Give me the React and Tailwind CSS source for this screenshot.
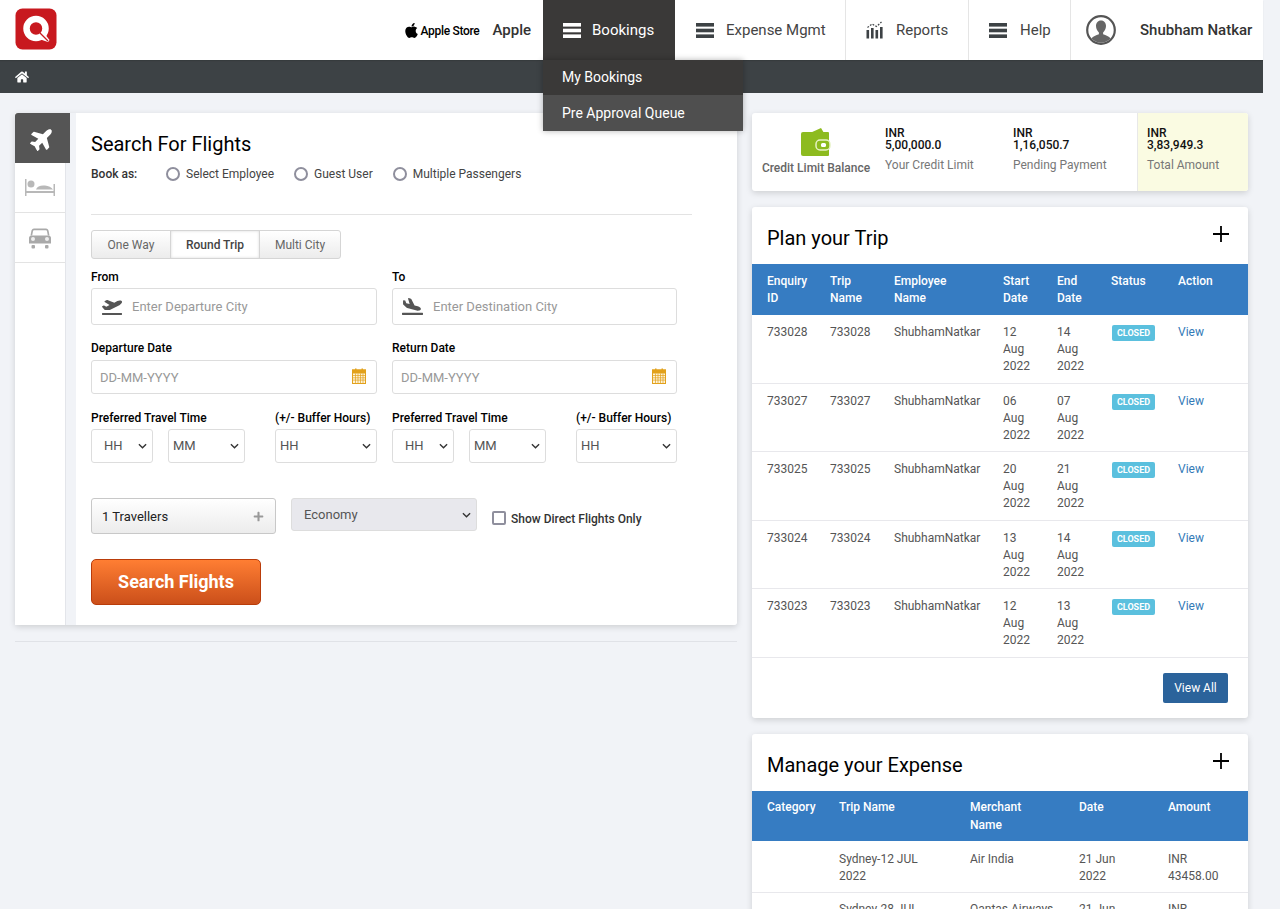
import { FaApple, FaHome, FaPlane, FaPlaneDeparture, FaPlaneArrival, FaPlus } from 'react-icons/fa'

const trips = [
  ['733028', '12', '14'],
  ['733027', '06', '07'],
  ['733025', '20', '21'],
  ['733024', '13', '14'],
  ['733023', '12', '13'],
]

function Bars({ className }) {
  return (
    <svg viewBox="0 0 18 15" className={className} fill="currentColor">
      <rect x="0" y="0" width="18" height="3.6" />
      <rect x="0" y="5.7" width="18" height="3.6" />
      <rect x="0" y="11.4" width="18" height="3.6" />
    </svg>
  )
}

function ReportsIcon() {
  return (
    <svg viewBox="0 0 18 18" className="w-[18px] h-[18px] text-[#3d4245]" fill="currentColor">
      <rect x="0.5" y="9" width="2.6" height="8.5" />
      <rect x="5" y="7" width="2.6" height="10.5" />
      <rect x="9.5" y="9" width="2.6" height="8.5" />
      <rect x="14" y="6" width="2.6" height="11.5" />
      <path d="M1.5 6.5 L6 3 L10.5 5.5 L15.5 1" fill="none" stroke="currentColor" strokeWidth="1.2" strokeDasharray="1.8 1.4" />
    </svg>
  )
}

function UserIcon() {
  return (
    <svg viewBox="0 0 30 30" className="w-[30px] h-[30px]">
      <rect x="1.2" y="1.2" width="27.6" height="27.6" rx="13.8" fill="#fff" stroke="#555" strokeWidth="2.2" />
      <path d="M15 5.5c3.3 0 5 2.500 5 5.600 0 2.800-1.500 5.400-2.900 6.300v1.900c2.800 1 6 2 7.400 4.200-2.300 2.600-5.700 4.200-9.500 4.200s-7.200-1.600-9.500-4.200c1.400-2.200 4.600-3.200 7.400-4.200v-1.900C11.500 16.500 10 13.900 10 11.100c0-3.100 1.700-5.600 5-5.600z" fill="#666" />
    </svg>
  )
}

function Logo() {
  return (
    <svg viewBox="0 0 42 42" className="w-[42px] h-[42px]">
      <rect x="0.500" y="0.500" width="41" height="41" rx="7" fill="#c8191f" />
      <circle cx="21" cy="20.500" r="9.500" fill="none" stroke="#fff" strokeWidth="6.500" />
      <path d="M21 30 L33 34 L34.500 32 L29 25z" fill="#fff" />
      <path d="M25 25 L33 33" stroke="#c8191f" strokeWidth="1.300" />
    </svg>
  )
}

function WalletIcon() {
  return (
    <svg viewBox="0 0 30 28" className="w-[30px] h-[28px]">
      <path d="M9 5 L20 0 L23 5z" fill="#8dbb1f" />
      <path d="M2 4 H27 a1 1 0 0 1 1 1 V27 a1 1 0 0 1-1 1 H2 a2 2 0 0 1-2-2 V6 a2 2 0 0 1 2-2z" fill="#8dbb1f" />
      <rect x="15" y="12" width="14" height="10" rx="4" fill="#8dbb1f" stroke="#e6f2c4" strokeWidth="1.500" />
      <rect x="20" y="15" width="5" height="4" rx="1.500" fill="#fff" />
    </svg>
  )
}

function BedIcon() {
  return (
    <svg viewBox="0 0 30 17" className="w-[30px] h-[17px]" fill="#b8b8b8">
      <rect x="0" y="0" width="1.500" height="17" />
      <rect x="28.500" y="5" width="1.500" height="12" />
      <rect x="0" y="12" width="30" height="2" />
      <circle cx="6" cy="5" r="3.500" />
      <path d="M11 10.500c1-3.500 5-4.500 9-4 3.500.4 6.500 1.800 8 4z" />
    </svg>
  )
}

function CarIcon() {
  return (
    <svg viewBox="0 0 22 22" className="w-[22px] h-[22px]" fill="#a9a9a9">
      <path d="M5 1.500h12c1.500 0 2.300 1 2.600 2.300l.9 4.700H18.800l-.8-4.300c-.1-.6-.5-1-1-1H5c-.5 0-.9.400-1 1l-.8 4.300H1.500l.9-4.700C2.700 2.500 3.500 1.500 5 1.500z" />
      <path d="M2.500 8.500h17c1.400 0 2.500 1.100 2.500 2.500v5.500H0V11c0-1.400 1.100-2.500 2.500-2.500z" />
      <circle cx="4" cy="12" r="2" fill="#eee" />
      <circle cx="18" cy="12" r="2" fill="#eee" />
      <rect x="2.500" y="18" width="3.500" height="3.500" rx="1" />
      <rect x="16" y="18" width="3.500" height="3.500" rx="1" />
    </svg>
  )
}

function CalendarIcon() {
  return (
    <svg viewBox="0 0 14 16" className="w-[14px] h-[16px]">
      <rect x="0.500" y="2" width="13" height="13.500" fill="#fdf3d8" stroke="#e2a11c" />
      <rect x="0.500" y="2" width="13" height="3" fill="#e2a11c" stroke="#e2a11c" />
      <rect x="3" y="0.500" width="1.500" height="3" fill="#e2a11c" />
      <rect x="9.500" y="0.500" width="1.500" height="3" fill="#e2a11c" />
      <path d="M1 7.500H13M1 9.800H13M1 12.100H13M3.500 5.500V15M6 5.500V15M8.500 5.500V15M11 5.500V15" stroke="#e2a11c" strokeWidth="0.700" />
    </svg>
  )
}

function Chevron() {
  return (
    <svg viewBox="0 0 10 6" className="w-[9px] h-[6px] absolute right-[6px] top-1/2 -translate-y-1/2 pointer-events-none text-[#333]" fill="none" stroke="currentColor" strokeWidth="1.500">
      <path d="M1 1l4 4 4-4" />
    </svg>
  )
}

function Select({ value, className, pad = 'pl-[5px]' }) {
  return (
    <div className={`relative ${className}`}>
      <select defaultValue={value} className={`appearance-none w-full h-[34px] bg-white border border-[#ddd] rounded-[3px] text-[13px] text-[#555] ${pad}`}>
        <option>{value}</option>
      </select>
      <Chevron />
    </div>
  )
}

function Radio({ label }) {
  return (
    <span className="flex items-center gap-[6px] text-[12px] text-[#444]">
      <span className="w-[14px] h-[14px] rounded-full border-2 border-[#8f8f9d] bg-white" />
      {label}
    </span>
  )
}

function NavItem({ icon, label, className }) {
  return (
    <div className={`flex items-center h-[60px] border-l border-[#e5e5e5] text-[15px] text-[#444] ${className}`}>
      {icon}
      {label}
    </div>
  )
}

function TimeRow({ lastWidth }) {
  return (
    <div className="flex w-[286px]">
      <Select value="HH" className="w-[62px]" pad="pl-[12px]" />
      <Select value="MM" className="w-[77px] ml-[15px]" pad="pl-[4px]" />
      <Select value="HH" className={`ml-[30px] ${lastWidth}`} pad="pl-[4px]" />
    </div>
  )
}

function Field({ label, icon, placeholder, right, className, h = 'h-[37px]', pad = 'pl-[40px]', gap = 'mt-[2px]' }) {
  return (
    <div className={className}>
      <label className="block text-[12px] font-medium text-black leading-[17px]">{label}</label>
      <div className={`relative ${gap} ${h}`}>
        {icon}
        <input placeholder={placeholder} className={`w-full h-full border border-[#ddd] rounded-[3px] bg-white text-[13px] placeholder:text-[#999] ${pad}`} />
        {right}
      </div>
    </div>
  )
}

function CardTitle({ title }) {
  return (
    <div className="flex justify-between h-[57px] px-[15px] pt-[16px]">
      <h2 className="text-[20px] leading-[30px] text-black">{title}</h2>
      <svg viewBox="0 0 16 16" className="w-[16px] h-[16px] mt-[3px] mr-[4px]" stroke="#000" strokeWidth="1.800">
        <path d="M8 0V16M0 8H16" />
      </svg>
    </div>
  )
}

function Amount({ value, label }) {
  return (
    <div>
      <div className="text-[12px] font-medium text-[#111] leading-[12px]">INR<br />{value}</div>
      <div className="text-[12px] text-[#777] mt-[6px] leading-[17px]">{label}</div>
    </div>
  )
}

export default function App() {
  return (
    <div className="w-full h-[909px] overflow-hidden bg-[#f1f3f7] font-['Roboto',sans-serif]">
      <div className="w-[1263px] relative">
        {/* header */}
        <header className="h-[60px] bg-white flex items-center shadow-[0_1px_1px_rgba(0,0,0,0.1)] relative">
          <div className="ml-[15px] -mt-[3px] flex"><Logo /></div>
          <div className="ml-auto flex items-center h-[60px]">
            <div className="flex items-center text-black font-medium text-[12px] tracking-[-0.3px] mr-[13px]">
              <FaApple className="text-[17px]" />
              <span className="mt-[2px]">Apple Store</span>
            </div>
            <div className="text-[15px] font-medium text-[#333] mr-[12px]">Apple</div>
            <div className="w-[132px] h-[60px] bg-[#3a3938] text-white flex items-center gap-[11px] pl-[20px] text-[15px]">
              <Bars className="w-[18px] h-[15px]" />
              Bookings
            </div>
            <NavItem className="w-[170px] border-l-0 pl-[21px] gap-[12px]" icon={<Bars className="w-[18px] h-[15px] text-[#3d4245]" />} label="Expense Mgmt" />
            <NavItem className="w-[123px] pl-[20px] gap-[12px]" icon={<ReportsIcon />} label="Reports" />
            <NavItem className="w-[102px] pl-[20px] gap-[13px]" icon={<Bars className="w-[18px] h-[15px] text-[#3d4245]" />} label="Help" />
            <div className="w-[193px] h-[60px] border-l border-[#e5e5e5] flex items-center pl-[15px]">
              <UserIcon />
              <span className="ml-[24px] text-[15px] font-medium text-[#333]">Shubham Natkar</span>
            </div>
          </div>
        </header>

        {/* breadcrumb */}
        <div className="h-[33px] bg-[#3d4245] flex items-center pl-[15px]">
          <FaHome className="text-white text-[14px]" />
        </div>

        {/* bookings dropdown */}
        <div className="absolute left-[543px] top-[60px] w-[200px] z-10 text-[14px] text-white shadow-[0_0_6px_rgba(0,0,0,0.3)]">
          <div className="h-[35px] bg-[#3a3938] pl-[19px] flex items-center">My Bookings</div>
          <div className="h-[36px] bg-[#4f4f4f] pl-[19px] flex items-center">Pre Approval Queue</div>
        </div>

        <div className="flex pt-[20px] pl-[15px]">
          {/* left column */}
          <div className="w-[722px]">
            <div className="flex h-[512px] rounded-[3px] shadow-[0_2px_6px_rgba(0,0,0,0.15)] relative">
              <div className="w-[51px] bg-white border-r border-[#e3e5ea]">
                <div className="w-[55px] h-[50px] bg-[#555] flex items-center justify-center rounded-tl-[3px] relative">
                  <FaPlane className="text-white text-[25px] -rotate-45" />
                </div>
                <div className="h-[50px] border-b border-[#e3e3e3] flex items-center justify-center">
                  <BedIcon />
                </div>
                <div className="h-[50px] border-b border-[#e3e3e3] flex items-center justify-center">
                  <CarIcon />
                </div>
              </div>
              <div className="w-[10px] bg-[#f1f3f7]" />
              <div className="flex-1 bg-white pl-[15px] rounded-r-[3px]">
                <h1 className="text-[20px] leading-[30px] text-black mt-[16px]">Search For Flights</h1>
                <div className="flex items-center h-[20px] mt-[5px] text-[12px]">
                  <span className="font-medium text-[#333] w-[75px]">Book as:</span>
                  <Radio label="Select Employee" />
                  <div className="w-[20px]" />
                  <Radio label="Guest User" />
                  <div className="w-[20px]" />
                  <Radio label="Multiple Passengers" />
                </div>
                <div className="w-[601px] border-t border-[#e3e3e3] mt-[30px]" />

                <div className="flex w-[250px] h-[29px] mt-[15px] border border-[#d5d5d5] rounded-[3px] text-[12px] bg-gradient-to-b from-white to-[#ececec]">
                  <div className="w-[78px] flex items-center justify-center text-[#666]">One Way</div>
                  <div className="w-[90px] flex items-center justify-center font-medium text-[#444] bg-white border-x border-[#d5d5d5] shadow-[inset_0_0_3px_rgba(0,0,0,0.15)]">Round Trip</div>
                  <div className="flex-1 flex items-center justify-center text-[#666]">Multi City</div>
                </div>

                <div className="flex gap-[15px] mt-[10px]">
                  <Field className="w-[286px]" label="From" placeholder="Enter Departure City"
                    icon={<FaPlaneDeparture className="absolute left-[11px] top-[9px] text-[20px] text-[#555]" />} />
                  <Field className="w-[285px]" label="To" placeholder="Enter Destination City"
                    icon={<FaPlaneArrival className="absolute left-[10px] top-[8px] text-[21px] text-[#555]" />} />
                </div>

                <div className="flex gap-[15px] mt-[15px]">
                  <Field className="w-[286px]" label="Departure Date" placeholder="DD-MM-YYYY" h="h-[34px]" pad="pl-[8px]" gap="mt-[3px]"
                    right={<span className="absolute right-[11px] top-[8px] flex"><CalendarIcon /></span>} />
                  <Field className="w-[285px]" label="Return Date" placeholder="DD-MM-YYYY" h="h-[34px]" pad="pl-[8px]" gap="mt-[3px]"
                    right={<span className="absolute right-[11px] top-[8px] flex"><CalendarIcon /></span>} />
                </div>

                <div className="flex gap-[15px] mt-[16px]">
                  {['w-[102px]', 'w-[101px]'].map(lastWidth => (
                    <div key={lastWidth} className="w-[286px]">
                      <div className="flex text-[12px] font-medium text-black leading-[17px]">
                        <span className="w-[184px]">Preferred Travel Time</span>
                        <span>(+/- Buffer Hours)</span>
                      </div>
                      <div className="mt-[2px]"><TimeRow lastWidth={lastWidth} /></div>
                    </div>
                  ))}
                </div>

                <div className="flex mt-[35px] items-start">
                  <div className="w-[185px] h-[36px] border border-[#c8c8c8] rounded-[3px] bg-gradient-to-b from-white to-[#ececec] flex items-center justify-between pl-[10px] pr-[11px] pt-[1px] text-[13px] text-[#222]">
                    1 Travellers
                    <FaPlus className="text-[#999] text-[11px]" />
                  </div>
                  <div className="relative w-[186px] h-[33px] ml-[15px]">
                    <select defaultValue="Economy" className="appearance-none w-full h-full bg-[#e8e8ed] border border-[#ddd] rounded-[3px] text-[13px] text-[#555] pl-[12px]">
                      <option>Economy</option>
                    </select>
                    <Chevron />
                  </div>
                  <div className="flex items-center ml-[15px] mt-[11px] text-[12px] font-medium text-[#333]">
                    <span className="w-[14px] h-[14px] border-2 border-[#8f8f9d] rounded-[2px] bg-white" />
                    <span className="ml-[5px] relative top-[1px]">Show Direct Flights Only</span>
                  </div>
                </div>

                <button className="block w-[170px] h-[46px] mt-[25px] pb-[2px] rounded-[5px] border border-[#b93c0a] bg-gradient-to-b from-[#ff7e33] to-[#cb4f1a] text-white text-[18px] font-bold">
                  Search Flights
                </button>
              </div>
            </div>
            <div className="border-t border-[#e0e2e7] mt-[16px]" />
          </div>

          {/* right column */}
          <div className="w-[496px] ml-[15px]">
            <div className="h-[78px] bg-white rounded-[3px] shadow-[0_2px_6px_rgba(0,0,0,0.15)] flex overflow-hidden">
              <div className="w-[128px] flex flex-col items-center pt-[15px]">
                <WalletIcon />
                <div className="text-[12px] font-medium text-[#666] mt-[4px] leading-[17px]">Credit Limit Balance</div>
              </div>
              <div className="w-[128px] pl-[5px] pt-[14px]">
                <Amount value="5,00,000.0" label="Your Credit Limit" />
              </div>
              <div className="w-[129px] pl-[5px] pt-[14px]">
                <Amount value="1,16,050.7" label="Pending Payment" />
              </div>
              <div className="flex-1 bg-[#fafbe2] border-l border-[#e8e8e8] pl-[9px] pt-[14px]">
                <Amount value="3,83,949.3" label="Total Amount" />
              </div>
            </div>

            <div className="mt-[16px] h-[511px] bg-white rounded-[3px] shadow-[0_2px_6px_rgba(0,0,0,0.15)]">
              <CardTitle title="Plan your Trip" />
              <table className="w-full table-fixed text-[12px] leading-[17px]">
                <colgroup>
                  <col className="w-[63px]" /><col className="w-[64px]" /><col className="w-[109px]" /><col className="w-[54px]" /><col className="w-[54px]" /><col className="w-[67px]" /><col />
                </colgroup>
                <thead className="bg-[#367cc2] text-white text-left">
                  <tr>
                    {['Enquiry ID', 'Trip Name', 'Employee Name', 'Start Date', 'End Date', 'Status', 'Action'].map(h => (
                      <th key={h} className="align-top font-medium pl-[15px] pr-[15px] pt-[9px] pb-[8px]">{h}</th>
                    ))}
                  </tr>
                </thead>
                <tbody className="text-[#555]">
                  {trips.map(([id, start, end]) => (
                    <tr key={id} className="border-b border-[#e8e8ec]">
                      <td className="align-top pl-[15px] pt-[9px] pb-[7.5px]">{id}</td>
                      <td className="align-top pl-[15px] pt-[9px] pb-[7.5px]">{id}</td>
                      <td className="align-top pl-[15px] pt-[9px] pb-[7.5px]">ShubhamNatkar</td>
                      <td className="align-top pl-[15px] pr-[5px] pt-[9px] pb-[7.5px]">{start} Aug 2022</td>
                      <td className="align-top pl-[15px] pr-[5px] pt-[9px] pb-[7.5px]">{end} Aug 2022</td>
                      <td className="align-top pl-[16px] pt-[10px] pb-[7.5px]">
                        <span className="block w-[43px] h-[16px] bg-[#5bc0de] rounded-[2px] text-white text-[9px] font-bold leading-[16px] text-center">CLOSED</span>
                      </td>
                      <td className="align-top pl-[15px] pt-[9px] pb-[7.5px] text-[#337ab7]">View</td>
                    </tr>
                  ))}
                </tbody>
              </table>
              <div className="flex justify-end pr-[20px] pt-[15px]">
                <button className="w-[65px] h-[30px] bg-[#2b639b] rounded-[2px] text-white text-[12px]">View All</button>
              </div>
            </div>

            <div className="mt-[16px] bg-white rounded-[3px] shadow-[0_2px_6px_rgba(0,0,0,0.15)]">
              <CardTitle title="Manage your Expense" />
              <table className="w-full table-fixed text-[12px] leading-[17px]">
                <colgroup>
                  <col className="w-[72px]" /><col className="w-[131px]" /><col className="w-[109px]" /><col className="w-[89px]" /><col />
                </colgroup>
                <thead className="bg-[#367cc2] text-white text-left">
                  <tr>
                    {['Category', 'Trip Name', 'Merchant Name', 'Date', 'Amount'].map(h => (
                      <th key={h} className="align-top font-medium pl-[15px] pr-[15px] pt-[7px] pb-[7px] leading-[18px]">{h}</th>
                    ))}
                  </tr>
                </thead>
                <tbody className="text-[#555]">
                  <tr className="border-b border-[#e8e8ec]">
                    <td />
                    <td className="align-top pl-[15px] pr-[15px] pt-[10px] pb-[7px]">Sydney-12 JUL 2022</td>
                    <td className="align-top pl-[15px] pt-[10px]">Air India</td>
                    <td className="align-top pl-[15px] pr-[20px] pt-[10px]">21 Jun 2022</td>
                    <td className="align-top pl-[15px] pr-[20px] pt-[10px]">INR 43458.00</td>
                  </tr>
                  <tr>
                    <td />
                    <td className="align-top pl-[15px] pr-[15px] pt-[8px]">Sydney-28 JUL 2022</td>
                    <td className="align-top pl-[15px] pt-[8px]">Qantas Airways</td>
                    <td className="align-top pl-[15px] pr-[20px] pt-[8px]">21 Jun 2022</td>
                    <td className="align-top pl-[15px] pr-[20px] pt-[8px]">INR 1200.00</td>
                  </tr>
                </tbody>
              </table>
            </div>
          </div>
        </div>
      </div>
    </div>
  )
}
